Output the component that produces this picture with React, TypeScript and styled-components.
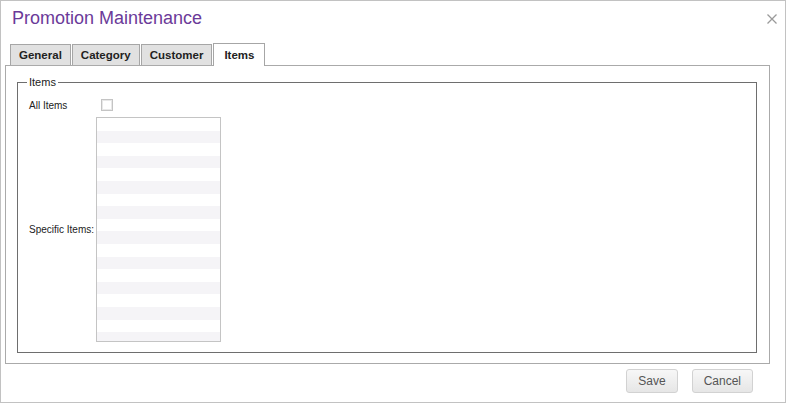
import React, { FC, useState } from 'react';
import styled, { createGlobalStyle } from 'styled-components';

const GlobalStyle = createGlobalStyle`
    html, body {
        margin: 0;
        padding: 0;
        background: #ffffff;
    }

    body {
        font-family: "Liberation Sans", Arial, sans-serif;
    }
`;

const TABS = ['General', 'Category', 'Customer', 'Items'];
const ITEM_ROWS = 18;

export const App: FC = () => {
    const [activeTab, setActiveTab] = useState('Items');
    const [allItems, setAllItems] = useState(false);

    return (
        <>
            <GlobalStyle />
            <Dialog>
                <Header>
                    <Title>Promotion Maintenance</Title>
                    <CloseButton aria-label="Close">
                        <svg width="10" height="10" viewBox="0 0 10 10">
                            <path d="M0.5 0.5 L9.5 9.5 M9.5 0.5 L0.5 9.5" stroke="#9a9a9a" strokeWidth="1.3" />
                        </svg>
                    </CloseButton>
                </Header>

                <Body>
                    <TabStrip>
                        { TABS.map(t => (
                            <Tab key={ t } $active={ t === activeTab } onClick={ () => setActiveTab(t) }>{ t }</Tab>
                        )) }
                    </TabStrip>

                    <Panel>
                        <Group>
                            <Legend>Items</Legend>
                            <FormGrid>
                                <FieldLabel>All Items</FieldLabel>
                                <CheckBox type="checkbox" checked={ allItems } onChange={ e => setAllItems(e.target.checked) } />

                                <FieldLabel>Specific Items:</FieldLabel>
                                <ItemList>
                                    { Array.from({ length: ITEM_ROWS }, (_, i) => <ItemRow key={ i } $odd={ i % 2 === 1 } />) }
                                </ItemList>
                            </FormGrid>
                        </Group>
                    </Panel>
                </Body>

                <Footer>
                    <Button>Save</Button>
                    <Button>Cancel</Button>
                </Footer>
            </Dialog>
        </>
    );
};

const Dialog = styled.div`
    box-sizing: border-box;
    width: 786px;
    height: 403px;
    border: 1px solid #c2c2c2;
    background: #fff;
    display: flex;
    flex-direction: column;
`;

const Header = styled.div`
    display: flex;
    align-items: center;
    justify-content: space-between;
    padding: 7px 8px 14px 11px;
`;

const Title = styled.h1`
    margin: 0;
    font-size: 18px;
    line-height: 21px;
    font-weight: normal;
    color: #6b3a99;
`;

const CloseButton = styled.button`
    border: none;
    background: none;
    padding: 0;
    width: 10px;
    height: 10px;
    cursor: pointer;
    display: flex;

    svg {
        display: block;
    }
`;

const Body = styled.div`
    padding: 0 15px 0 4px;
`;

const TabStrip = styled.div`
    position: relative;
    z-index: 1;
    display: flex;
    align-items: flex-end;
    gap: 1px;
    height: 23px;
    margin-bottom: -1px;
    padding-left: 5px;
`;

const Tab = styled.div<{ $active: boolean }>`
    box-sizing: border-box;
    height: ${ p => p.$active ? '23px' : '21px' };
    margin-bottom: ${ p => p.$active ? '0' : '1px' };
    padding: ${ p => p.$active ? '3px 10px 0' : '2px 8px 0' };
    border: 1px solid #a6a6a6;
    border-bottom: none;
    background: ${ p => p.$active ? '#ffffff' : '#e1e1e1' };
    font-size: 11.5px;
    line-height: 17px;
    font-weight: bold;
    color: #222;
    cursor: pointer;
`;

const Panel = styled.div`
    border: 1px solid #aaaaaa;
    padding: 10px 12px 10px 11px;
`;

const Group = styled.fieldset`
    margin: 0;
    border: 1px solid #6e6e6e;
    padding: 10px 10px 10px 9px;
    min-width: 0;
`;

const Legend = styled.legend`
    padding: 0 2px;
    font-size: 11px;
    line-height: 13px;
    color: #222;
`;

const FormGrid = styled.div`
    display: grid;
    grid-template-columns: 67px 125px;
    row-gap: 6px;
    align-items: center;
    padding-left: 2px;
`;

const FieldLabel = styled.label`
    font-size: 10px;
    color: #222;
    white-space: nowrap;
`;

const CheckBox = styled.input`
    appearance: none;
    box-sizing: border-box;
    width: 12px;
    height: 12px;
    margin: 0 0 0 5px;
    border: 1px solid #c4c4c4;
    box-shadow: inset 0 0 0 1px #e8e8e8;
    background: #fff;

    &:checked {
        background: #6b3a99;
    }
`;

const ItemList = styled.div`
    box-sizing: border-box;
    height: 225px;
    border: 1px solid #c4c4c4;
    overflow: hidden;
`;

const ItemRow = styled.div<{ $odd: boolean }>`
    height: 12.6px;
    background: ${ p => p.$odd ? '#f5f4f7' : '#ffffff' };
`;

const Footer = styled.div`
    display: flex;
    justify-content: flex-end;
    gap: 14px;
    padding: 5px 32px 0 0;
`;

const Button = styled.button`
    box-sizing: border-box;
    height: 24px;
    padding: 0 11px;
    border: 1px solid #d2d2d2;
    border-radius: 3px;
    background: linear-gradient(to bottom, #f7f7f7, #e6e6e6);
    font-family: "Liberation Sans", Arial, sans-serif;
    font-size: 12px;
    color: #555;
    cursor: pointer;
`;

export default App;
